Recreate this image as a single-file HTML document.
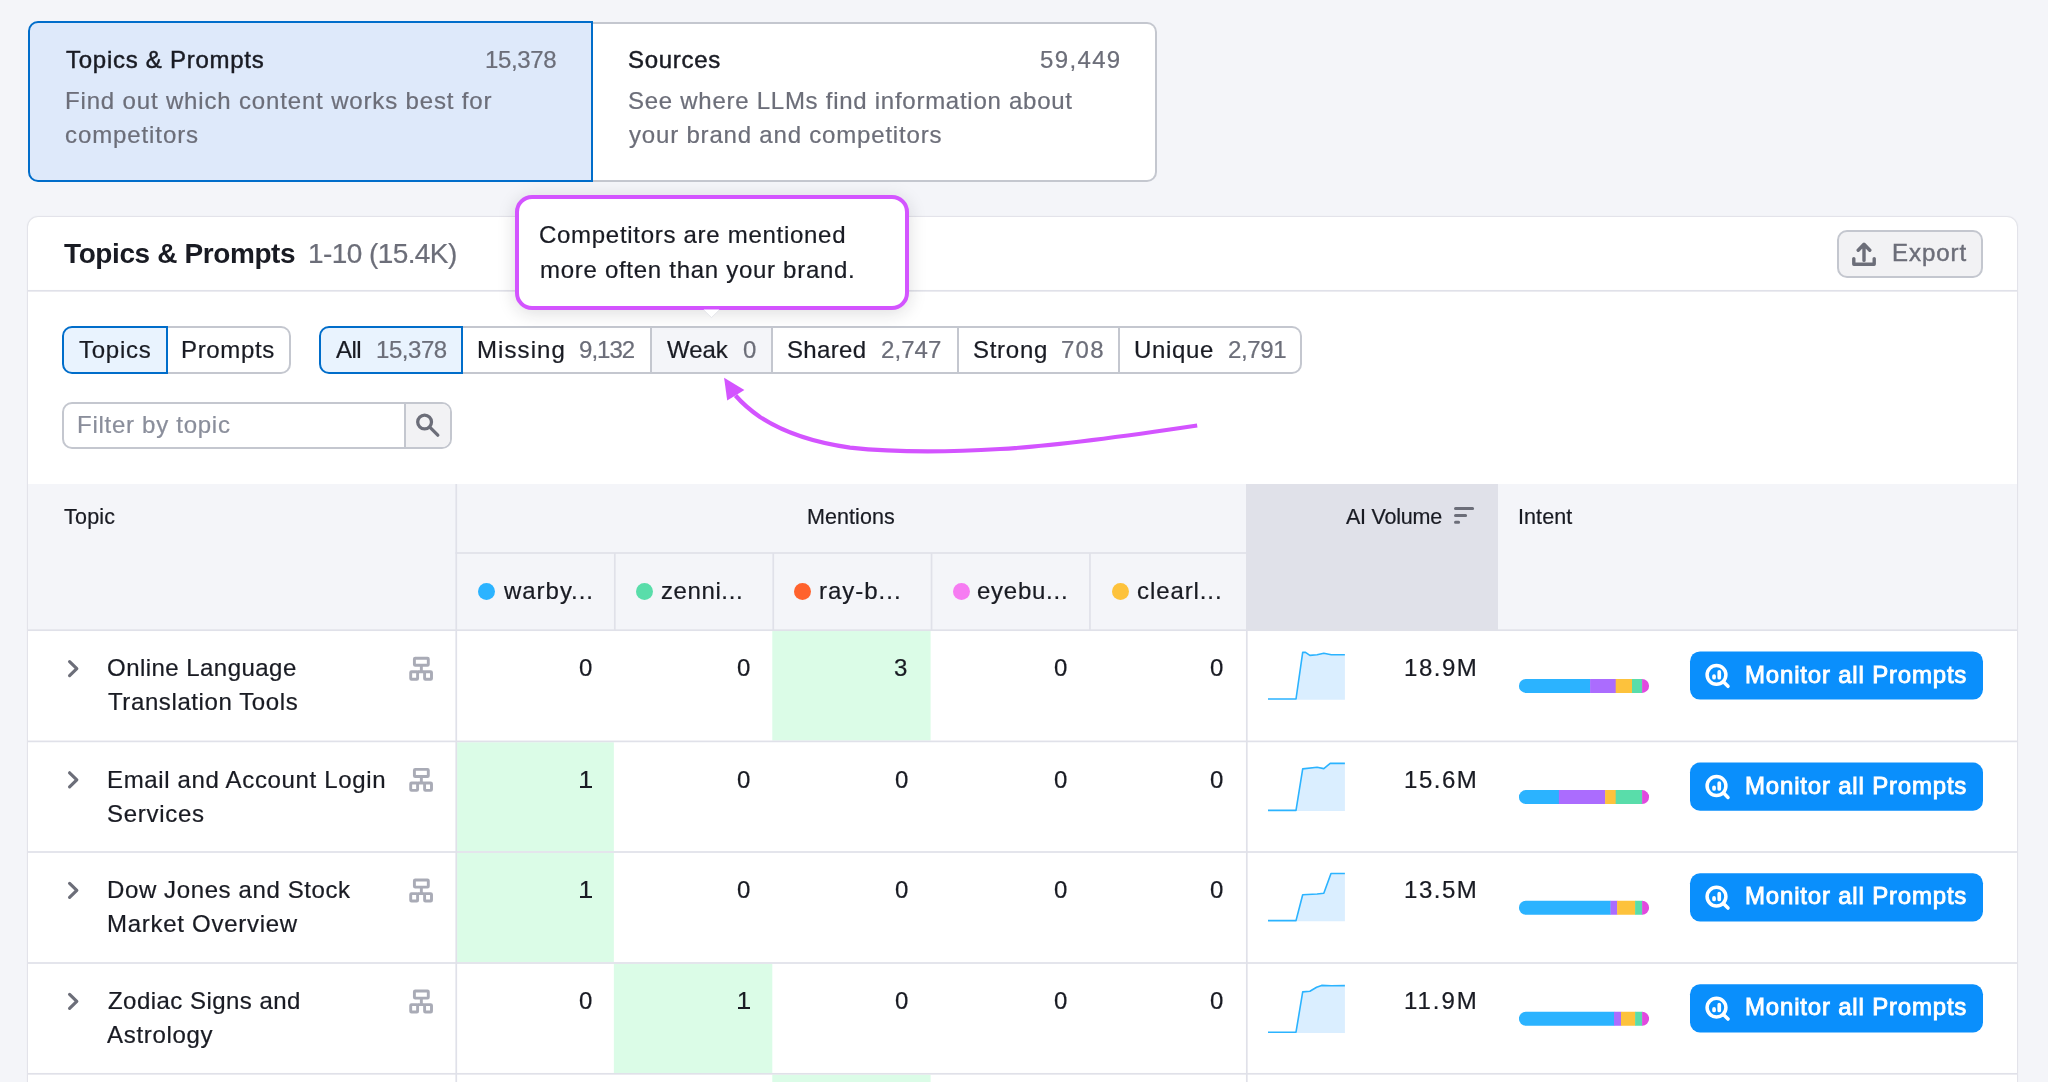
<!DOCTYPE html>
<html><head><meta charset="utf-8"><title>Topics &amp; Prompts</title>
<style>
html,body{margin:0;padding:0;width:2048px;height:1082px;overflow:hidden;}
body{width:2048px;height:1082px;overflow:hidden;background:#f4f5f9;position:relative;font-family:"Liberation Sans",sans-serif;}
.t{will-change:transform;position:absolute;white-space:nowrap;line-height:1;font-family:"Liberation Sans",sans-serif;z-index:8;}
.a{position:absolute;box-sizing:border-box;}
svg{position:absolute;overflow:hidden;}
.btn{position:absolute;box-sizing:border-box;background:#0a8ffc;border-radius:10px;width:293px;height:48px;left:1690px;z-index:2;}
.gr{position:absolute;background:#dbfce7;z-index:1;}
.hl{position:absolute;background:#e0e1e9;height:2px;z-index:2;}
.vl{position:absolute;background:#e0e1e9;width:2px;z-index:2;}
.dot{position:absolute;width:17px;height:17px;border-radius:50%;z-index:3;}
.bar{position:absolute;left:1519px;width:130px;height:13px;border-radius:7px;overflow:hidden;z-index:2;}
.bar i{position:absolute;top:0;height:13px;}

</style></head>
<body>
<div class="a" style="left:592px;top:22px;width:565px;height:160px;background:#fff;border:2px solid #c4c7cf;border-left:none;border-radius:0 10px 10px 0;"></div>
<div class="a" style="left:28px;top:21px;width:565px;height:161px;background:#dee9fa;border:2px solid #006dca;border-radius:10px 0 0 10px;"></div>
<div class="a" style="left:28px;top:217px;width:1989px;height:865px;background:#fff;border-radius:10px 10px 0 0;box-shadow:0 0 1px 1px #e1e2e8;"></div>
<div class="a" style="left:1837px;top:230px;width:146px;height:48px;background:#f2f2f4;border:2px solid #c4c7cf;border-radius:10px;"></div>
<svg style="left:0;top:0;z-index:4" width="2048" height="300"><g fill="none" stroke="#6c6e79" stroke-width="3.4" stroke-linecap="round" stroke-linejoin="round"><path d="M1864 260.4V244.6M1858.2 250.2L1864 244.2L1869.8 250.2"/><path d="M1853.8 258.6V264.2H1874.2V258.6"/></g></svg>
<div class="a" style="left:166px;top:326px;width:125px;height:48px;background:#fff;border:2px solid #c4c7cf;border-left:none;border-radius:0 10px 10px 0;"></div>
<div class="a" style="left:62px;top:326px;width:106px;height:48px;background:#e9f3fe;border:2px solid #006dca;border-radius:10px 0 0 10px;"></div>
<div class="a" style="left:461px;top:326px;width:841px;height:48px;background:#fff;border:2px solid #c4c7cf;border-left:none;border-radius:0 10px 10px 0;"></div>
<div class="a" style="left:651px;top:328px;width:121px;height:44px;background:#f4f5f9;"></div>
<div class="a" style="left:650px;top:328px;width:2px;height:44px;background:#c4c7cf;"></div>
<div class="a" style="left:771px;top:328px;width:2px;height:44px;background:#c4c7cf;"></div>
<div class="a" style="left:957px;top:328px;width:2px;height:44px;background:#c4c7cf;"></div>
<div class="a" style="left:1118px;top:328px;width:2px;height:44px;background:#c4c7cf;"></div>
<div class="a" style="left:319px;top:326px;width:144px;height:48px;background:#e9f3fe;border:2px solid #006dca;border-radius:10px 0 0 10px;"></div>
<div class="a" style="left:62px;top:402px;width:390px;height:47px;background:#fff;border:2px solid #c4c7cf;border-radius:10px;overflow:hidden;"><div class="a" style="left:340px;top:0;width:2px;height:43px;background:#c4c7cf;"></div><div class="a" style="left:342px;top:0;width:44px;height:43px;background:#f2f2f4;"></div></div>
<svg style="left:0;top:0;z-index:4" width="2048" height="500"><g fill="none" stroke="#6c6e79" stroke-width="3.3" stroke-linecap="round"><circle cx="424.6" cy="422" r="6.9"/><path d="M429.8 427.2L437.8 435.2"/></g></svg>
<div class="a" style="left:28px;top:484px;width:1989px;height:146px;background:#f4f5f9;"></div>
<div class="a" style="left:1246px;top:484px;width:252px;height:146px;background:#e0e1e9;"></div>
<svg style="left:0;top:0;z-index:4" width="2048" height="600"><g stroke="#6c6e79" stroke-width="3" stroke-linecap="round"><path d="M1455.5 508.6H1472.6M1455.5 515.4H1465.6M1455.5 522.3H1458.6"/></g></svg>
<div class="dot" style="left:477.9px;top:583px;background:#2bb3ff;"></div>
<div class="dot" style="left:636px;top:583px;background:#59ddaa;"></div>
<div class="dot" style="left:794px;top:583px;background:#ff622d;"></div>
<div class="dot" style="left:952.5px;top:583px;background:#f67cf2;"></div>
<div class="dot" style="left:1111.5px;top:583px;background:#fdc23c;"></div>
<svg style="left:0;top:0;z-index:3" width="2048" height="1082"><g transform="translate(0 630.00)"><path d="M69.6 31.6L76.8 38.6L69.6 45.6" fill="none" stroke="#6c6e79" stroke-width="3.2" stroke-linecap="round" stroke-linejoin="round"/><g fill="none" stroke="#a9abb6" stroke-width="2.9" stroke-linejoin="round"><rect x="414.4" y="28.2" width="13.9" height="7.1" rx="0.8"/><path d="M421.35 35.3V41.8M417.6 41.8H424.6"/><rect x="410.7" y="41.8" width="6.9" height="7.4" rx="0.8"/><rect x="424.6" y="41.8" width="6.9" height="7.4" rx="0.8"/></g><path d="M1296.0 69.0 L1302.7 22.4 L1305.5 22.4 L1309.9 25.4 L1317.1 24.8 L1323.8 23.3 L1331.3 24.8 L1344.9 24.8 L1344.9 69.7 L1296.0 69.7Z" fill="#daeeff"/><path d="M1268.0 69.0 L1296.0 69.0 L1302.7 22.4 L1305.5 22.4 L1309.9 25.4 L1317.1 24.8 L1323.8 23.3 L1331.3 24.8 L1344.9 24.8" fill="none" stroke="#2bb3ff" stroke-width="1.6" stroke-linejoin="round"/><clipPath id="cp0"><rect x="1518.9" y="48.9" width="130.2" height="14" rx="7"/></clipPath><g clip-path="url(#cp0)"><rect x="1518.9" y="48" width="71.5" height="16" fill="#2bb3ff"/><rect x="1590.1" y="48" width="25.9" height="16" fill="#ab6cfe"/><rect x="1615.7" y="48" width="16.6" height="16" fill="#fdc23c"/><rect x="1632.0" y="48" width="10.4" height="16" fill="#59ddaa"/><rect x="1642.1" y="48" width="7.3" height="16" fill="#e14adf"/></g><rect x="1690" y="21.4" width="293" height="48.2" rx="10" fill="#0a8ffc"/><g fill="none" stroke="#fff" stroke-width="3.5" stroke-linecap="round"><circle cx="1716.5" cy="44.8" r="9.4"/><path d="M1723.6 51.9L1728 56.3"/></g><g stroke="#fff" stroke-width="3.7" stroke-linecap="round"><path d="M1714.05 46.1V47.7M1719.25 41.9V47.7"/></g></g><g transform="translate(0 741.20)"><path d="M69.6 31.6L76.8 38.6L69.6 45.6" fill="none" stroke="#6c6e79" stroke-width="3.2" stroke-linecap="round" stroke-linejoin="round"/><g fill="none" stroke="#a9abb6" stroke-width="2.9" stroke-linejoin="round"><rect x="414.4" y="28.2" width="13.9" height="7.1" rx="0.8"/><path d="M421.35 35.3V41.8M417.6 41.8H424.6"/><rect x="410.7" y="41.8" width="6.9" height="7.4" rx="0.8"/><rect x="424.6" y="41.8" width="6.9" height="7.4" rx="0.8"/></g><path d="M1296.0 69.2 L1302.7 27.7 L1317.1 26.1 L1323.8 27.4 L1330.2 22.2 L1344.9 22.2 L1344.9 69.9 L1296.0 69.9Z" fill="#daeeff"/><path d="M1268.0 69.2 L1296.0 69.2 L1302.7 27.7 L1317.1 26.1 L1323.8 27.4 L1330.2 22.2 L1344.9 22.2" fill="none" stroke="#2bb3ff" stroke-width="1.6" stroke-linejoin="round"/><clipPath id="cp1"><rect x="1518.9" y="48.9" width="130.2" height="14" rx="7"/></clipPath><g clip-path="url(#cp1)"><rect x="1518.9" y="48" width="40.3" height="16" fill="#2bb3ff"/><rect x="1558.9" y="48" width="46.5" height="16" fill="#ab6cfe"/><rect x="1605.1" y="48" width="10.9" height="16" fill="#fdc23c"/><rect x="1615.7" y="48" width="26.7" height="16" fill="#59ddaa"/><rect x="1642.1" y="48" width="7.3" height="16" fill="#e14adf"/></g><rect x="1690" y="21.4" width="293" height="48.2" rx="10" fill="#0a8ffc"/><g fill="none" stroke="#fff" stroke-width="3.5" stroke-linecap="round"><circle cx="1716.5" cy="44.8" r="9.4"/><path d="M1723.6 51.9L1728 56.3"/></g><g stroke="#fff" stroke-width="3.7" stroke-linecap="round"><path d="M1714.05 46.1V47.7M1719.25 41.9V47.7"/></g></g><g transform="translate(0 851.80)"><path d="M69.6 31.6L76.8 38.6L69.6 45.6" fill="none" stroke="#6c6e79" stroke-width="3.2" stroke-linecap="round" stroke-linejoin="round"/><g fill="none" stroke="#a9abb6" stroke-width="2.9" stroke-linejoin="round"><rect x="414.4" y="28.2" width="13.9" height="7.1" rx="0.8"/><path d="M421.35 35.3V41.8M417.6 41.8H424.6"/><rect x="410.7" y="41.8" width="6.9" height="7.4" rx="0.8"/><rect x="424.6" y="41.8" width="6.9" height="7.4" rx="0.8"/></g><path d="M1296.0 68.8 L1302.7 43.0 L1317.1 42.2 L1323.8 41.5 L1331.0 21.7 L1344.9 21.7 L1344.9 69.5 L1296.0 69.5Z" fill="#daeeff"/><path d="M1268.0 68.8 L1296.0 68.8 L1302.7 43.0 L1317.1 42.2 L1323.8 41.5 L1331.0 21.7 L1344.9 21.7" fill="none" stroke="#2bb3ff" stroke-width="1.6" stroke-linejoin="round"/><clipPath id="cp2"><rect x="1518.9" y="48.9" width="130.2" height="14" rx="7"/></clipPath><g clip-path="url(#cp2)"><rect x="1518.9" y="48" width="91.9" height="16" fill="#2bb3ff"/><rect x="1610.5" y="48" width="6.9" height="16" fill="#ab6cfe"/><rect x="1617.1" y="48" width="18.3" height="16" fill="#fdc23c"/><rect x="1635.1" y="48" width="7.3" height="16" fill="#59ddaa"/><rect x="1642.1" y="48" width="7.3" height="16" fill="#e14adf"/></g><rect x="1690" y="21.4" width="293" height="48.2" rx="10" fill="#0a8ffc"/><g fill="none" stroke="#fff" stroke-width="3.5" stroke-linecap="round"><circle cx="1716.5" cy="44.8" r="9.4"/><path d="M1723.6 51.9L1728 56.3"/></g><g stroke="#fff" stroke-width="3.7" stroke-linecap="round"><path d="M1714.05 46.1V47.7M1719.25 41.9V47.7"/></g></g><g transform="translate(0 962.80)"><path d="M69.6 31.6L76.8 38.6L69.6 45.6" fill="none" stroke="#6c6e79" stroke-width="3.2" stroke-linecap="round" stroke-linejoin="round"/><g fill="none" stroke="#a9abb6" stroke-width="2.9" stroke-linejoin="round"><rect x="414.4" y="28.2" width="13.9" height="7.1" rx="0.8"/><path d="M421.35 35.3V41.8M417.6 41.8H424.6"/><rect x="410.7" y="41.8" width="6.9" height="7.4" rx="0.8"/><rect x="424.6" y="41.8" width="6.9" height="7.4" rx="0.8"/></g><path d="M1296.0 69.4 L1302.7 29.1 L1309.9 28.5 L1316.6 24.5 L1321.6 22.6 L1331.3 23.0 L1344.9 22.8 L1344.9 70.1 L1296.0 70.1Z" fill="#daeeff"/><path d="M1268.0 69.4 L1296.0 69.4 L1302.7 29.1 L1309.9 28.5 L1316.6 24.5 L1321.6 22.6 L1331.3 23.0 L1344.9 22.8" fill="none" stroke="#2bb3ff" stroke-width="1.6" stroke-linejoin="round"/><clipPath id="cp3"><rect x="1518.9" y="48.9" width="130.2" height="14" rx="7"/></clipPath><g clip-path="url(#cp3)"><rect x="1518.9" y="48" width="95.4" height="16" fill="#2bb3ff"/><rect x="1614.0" y="48" width="7.3" height="16" fill="#ab6cfe"/><rect x="1621.0" y="48" width="14.4" height="16" fill="#fdc23c"/><rect x="1635.1" y="48" width="7.3" height="16" fill="#59ddaa"/><rect x="1642.1" y="48" width="7.3" height="16" fill="#e14adf"/></g><rect x="1690" y="21.4" width="293" height="48.2" rx="10" fill="#0a8ffc"/><g fill="none" stroke="#fff" stroke-width="3.5" stroke-linecap="round"><circle cx="1716.5" cy="44.8" r="9.4"/><path d="M1723.6 51.9L1728 56.3"/></g><g stroke="#fff" stroke-width="3.7" stroke-linecap="round"><path d="M1714.05 46.1V47.7M1719.25 41.9V47.7"/></g></g></svg>
<div class="a" style="left:579.9px;top:786px;width:12px;height:2px;background:#191b23;z-index:9;"></div>
<div class="a" style="left:579.9px;top:896px;width:12px;height:2px;background:#191b23;z-index:9;"></div>
<div class="a" style="left:737.9px;top:1007px;width:12px;height:2px;background:#191b23;z-index:9;"></div>
<svg style="left:0;top:0;z-index:2" width="2048" height="1082"><rect x="772.30" y="631.05" width="158.30" height="109.50" fill="#dbfce7"/><rect x="457.10" y="742.25" width="156.75" height="108.90" fill="#dbfce7"/><rect x="457.10" y="852.85" width="156.75" height="109.30" fill="#dbfce7"/><rect x="613.85" y="963.85" width="158.45" height="109.10" fill="#dbfce7"/><rect x="772.30" y="1074.65" width="158.30" height="15.35" fill="#dbfce7"/><rect x="28" y="289.95" width="1989" height="1.7" fill="#e0e1e9"/><rect x="455.4" y="552.15" width="790.60" height="1.7" fill="#e0e1e9"/><rect x="28" y="629.35" width="1989" height="1.7" fill="#e0e1e9"/><rect x="28" y="740.55" width="1989" height="1.7" fill="#e0e1e9"/><rect x="28" y="851.15" width="1989" height="1.7" fill="#e0e1e9"/><rect x="28" y="962.15" width="1989" height="1.7" fill="#e0e1e9"/><rect x="28" y="1072.95" width="1989" height="1.7" fill="#e0e1e9"/><rect x="455.4" y="484" width="1.7" height="620" fill="#e0e1e9"/><rect x="1245.95" y="630.2" width="1.7" height="500" fill="#e0e1e9"/><rect x="613.95" y="553" width="1.7" height="77.20" fill="#e0e1e9"/><rect x="772.40" y="553" width="1.7" height="77.20" fill="#e0e1e9"/><rect x="930.70" y="553" width="1.7" height="77.20" fill="#e0e1e9"/><rect x="1089.10" y="553" width="1.7" height="77.20" fill="#e0e1e9"/></svg>
<div class="a" style="left:515px;top:195px;width:393.5px;height:115px;background:#fff;border:4px solid #d354ff;border-radius:17px;z-index:6;box-shadow:0 3px 18px rgba(25,27,35,0.15);"></div>
<svg style="left:0;top:0;z-index:7" width="2048" height="500"><path d="M703.6 309.6L711.5 317.4L719.4 309.6Z" fill="#fff"/><path d="M704 310.2L711.5 317.6L719 310.2" fill="none" stroke="#e3e4ea" stroke-width="0.9"/></svg>
<svg style="left:0;top:0;z-index:7" width="2048" height="500"><path d="M1197.2 425.5C1100 440 1040 447 1000 449C960 451.5 900 453 850 447.6C810 442 780 430 760 417C750 410 742 403 735.5 395.5" fill="none" stroke="#d354ff" stroke-width="4.2"/><path d="M724.1 377.8L744.4 390L727.2 400.6Z" fill="#d354ff"/></svg>
<span class="t" style="left:66.08px;top:48.00px;font-size:24px;font-weight:400;color:#191b23;letter-spacing:0.728px;-webkit-text-stroke:0.45px #191b23;">Topics &amp; Prompts</span>
<span class="t" style="left:484.56px;top:48.00px;font-size:24px;font-weight:400;color:#6c6e79;letter-spacing:-0.345px;-webkit-text-stroke:0.22px #6c6e79;">15,378</span>
<span class="t" style="left:65.30px;top:89.00px;font-size:24px;font-weight:400;color:#6c6e79;letter-spacing:0.840px;-webkit-text-stroke:0.22px #6c6e79;">Find out which content works best for</span>
<span class="t" style="left:65.38px;top:123.00px;font-size:24px;font-weight:400;color:#6c6e79;letter-spacing:0.901px;-webkit-text-stroke:0.22px #6c6e79;">competitors</span>
<span class="t" style="left:628.06px;top:48.00px;font-size:24px;font-weight:400;color:#191b23;letter-spacing:0.689px;-webkit-text-stroke:0.45px #191b23;">Sources</span>
<span class="t" style="left:1039.56px;top:48.00px;font-size:24px;font-weight:400;color:#6c6e79;letter-spacing:1.355px;-webkit-text-stroke:0.22px #6c6e79;">59,449</span>
<span class="t" style="left:628.06px;top:89.00px;font-size:24px;font-weight:400;color:#6c6e79;letter-spacing:0.733px;-webkit-text-stroke:0.22px #6c6e79;">See where LLMs find information about</span>
<span class="t" style="left:628.96px;top:123.00px;font-size:24px;font-weight:400;color:#6c6e79;letter-spacing:0.812px;-webkit-text-stroke:0.22px #6c6e79;">your brand and competitors</span>
<span class="t" style="left:63.52px;top:240.00px;font-size:28px;font-weight:700;color:#191b23;letter-spacing:-0.394px;">Topics &amp; Prompts</span>
<span class="t" style="left:308.30px;top:240.00px;font-size:28px;font-weight:400;color:#6c6e79;letter-spacing:-0.578px;-webkit-text-stroke:0.22px #6c6e79;">1-10 (15.4K)</span>
<span class="t" style="left:539.06px;top:223.00px;font-size:24px;font-weight:400;color:#191b23;letter-spacing:0.709px;-webkit-text-stroke:0.22px #191b23;">Competitors are mentioned</span>
<span class="t" style="left:539.62px;top:258.00px;font-size:24px;font-weight:400;color:#191b23;letter-spacing:0.714px;-webkit-text-stroke:0.22px #191b23;">more often than your brand.</span>
<span class="t" style="left:1891.54px;top:241.00px;font-size:24px;font-weight:400;color:#6c6e79;letter-spacing:0.949px;-webkit-text-stroke:0.45px #6c6e79;">Export</span>
<span class="t" style="left:78.70px;top:338.00px;font-size:24px;font-weight:400;color:#191b23;letter-spacing:0.762px;-webkit-text-stroke:0.22px #191b23;">Topics</span>
<span class="t" style="left:181.30px;top:338.00px;font-size:24px;font-weight:400;color:#191b23;letter-spacing:0.660px;-webkit-text-stroke:0.22px #191b23;">Prompts</span>
<span class="t" style="left:335.52px;top:338.00px;font-size:24px;font-weight:400;color:#191b23;letter-spacing:-0.596px;-webkit-text-stroke:0.22px #191b23;">All</span>
<span class="t" style="left:375.56px;top:338.00px;font-size:24px;font-weight:400;color:#6c6e79;letter-spacing:-0.457px;-webkit-text-stroke:0.22px #6c6e79;">15,378</span>
<span class="t" style="left:476.54px;top:338.00px;font-size:24px;font-weight:400;color:#191b23;letter-spacing:1.080px;-webkit-text-stroke:0.22px #191b23;">Missing</span>
<span class="t" style="left:578.62px;top:338.00px;font-size:24px;font-weight:400;color:#6c6e79;letter-spacing:-0.971px;-webkit-text-stroke:0.22px #6c6e79;">9,132</span>
<span class="t" style="left:667.08px;top:338.00px;font-size:24px;font-weight:400;color:#191b23;letter-spacing:-0.027px;-webkit-text-stroke:0.22px #191b23;">Weak</span>
<span class="t" style="left:743.00px;top:338.00px;font-size:24px;font-weight:400;color:#6c6e79;letter-spacing:0.000px;-webkit-text-stroke:0.22px #6c6e79;">0</span>
<span class="t" style="left:787.06px;top:338.00px;font-size:24px;font-weight:400;color:#191b23;letter-spacing:0.322px;-webkit-text-stroke:0.22px #191b23;">Shared</span>
<span class="t" style="left:881.06px;top:338.00px;font-size:24px;font-weight:400;color:#6c6e79;letter-spacing:0.059px;-webkit-text-stroke:0.22px #6c6e79;">2,747</span>
<span class="t" style="left:973.00px;top:338.00px;font-size:24px;font-weight:400;color:#191b23;letter-spacing:0.720px;-webkit-text-stroke:0.22px #191b23;">Strong</span>
<span class="t" style="left:1061.38px;top:338.00px;font-size:24px;font-weight:400;color:#6c6e79;letter-spacing:1.257px;-webkit-text-stroke:0.22px #6c6e79;">708</span>
<span class="t" style="left:1133.88px;top:338.00px;font-size:24px;font-weight:400;color:#191b23;letter-spacing:0.675px;-webkit-text-stroke:0.22px #191b23;">Unique</span>
<span class="t" style="left:1228.12px;top:338.00px;font-size:24px;font-weight:400;color:#6c6e79;letter-spacing:-0.361px;-webkit-text-stroke:0.22px #6c6e79;">2,791</span>
<span class="t" style="left:77.30px;top:413.00px;font-size:24px;font-weight:400;color:#8a8e9b;letter-spacing:0.730px;-webkit-text-stroke:0.22px #8a8e9b;">Filter by topic</span>
<span class="t" style="left:63.52px;top:507.00px;font-size:21.5px;font-weight:400;color:#191b23;letter-spacing:0.209px;-webkit-text-stroke:0.22px #191b23;">Topic</span>
<span class="t" style="left:807.44px;top:507.00px;font-size:21.5px;font-weight:400;color:#191b23;letter-spacing:0.079px;-webkit-text-stroke:0.22px #191b23;">Mentions</span>
<span class="t" style="left:1346.14px;top:507.00px;font-size:21.5px;font-weight:400;color:#191b23;letter-spacing:-0.238px;-webkit-text-stroke:0.22px #191b23;">AI Volume</span>
<span class="t" style="left:1517.86px;top:507.00px;font-size:21.5px;font-weight:400;color:#191b23;letter-spacing:0.089px;-webkit-text-stroke:0.22px #191b23;">Intent</span>
<span class="t" style="left:504.02px;top:579.00px;font-size:24px;font-weight:400;color:#191b23;letter-spacing:0.964px;-webkit-text-stroke:0.22px #191b23;">warby...</span>
<span class="t" style="left:660.56px;top:579.00px;font-size:24px;font-weight:400;color:#191b23;letter-spacing:0.598px;-webkit-text-stroke:0.22px #191b23;">zenni...</span>
<span class="t" style="left:818.56px;top:579.00px;font-size:24px;font-weight:400;color:#191b23;letter-spacing:0.985px;-webkit-text-stroke:0.22px #191b23;">ray-b...</span>
<span class="t" style="left:976.56px;top:579.00px;font-size:24px;font-weight:400;color:#191b23;letter-spacing:0.739px;-webkit-text-stroke:0.22px #191b23;">eyebu...</span>
<span class="t" style="left:1136.56px;top:579.00px;font-size:24px;font-weight:400;color:#191b23;letter-spacing:0.903px;-webkit-text-stroke:0.22px #191b23;">clearl...</span>
<span class="t" style="left:107.00px;top:656.00px;font-size:24px;font-weight:400;color:#191b23;letter-spacing:0.458px;-webkit-text-stroke:0.22px #191b23;">Online Language</span>
<span class="t" style="left:107.58px;top:690.00px;font-size:24px;font-weight:400;color:#191b23;letter-spacing:0.598px;-webkit-text-stroke:0.22px #191b23;">Translation Tools</span>
<span class="t" style="left:578.96px;top:656.00px;font-size:24px;font-weight:400;color:#191b23;letter-spacing:0.000px;-webkit-text-stroke:0.22px #191b23;">0</span>
<span class="t" style="left:736.96px;top:656.00px;font-size:24px;font-weight:400;color:#191b23;letter-spacing:0.000px;-webkit-text-stroke:0.22px #191b23;">0</span>
<span class="t" style="left:894.06px;top:656.00px;font-size:24px;font-weight:400;color:#191b23;letter-spacing:0.000px;-webkit-text-stroke:0.22px #191b23;">3</span>
<span class="t" style="left:1053.96px;top:656.00px;font-size:24px;font-weight:400;color:#191b23;letter-spacing:0.000px;-webkit-text-stroke:0.22px #191b23;">0</span>
<span class="t" style="left:1209.96px;top:656.00px;font-size:24px;font-weight:400;color:#191b23;letter-spacing:0.000px;-webkit-text-stroke:0.22px #191b23;">0</span>
<span class="t" style="left:1404.00px;top:656.00px;font-size:24px;font-weight:400;color:#191b23;letter-spacing:1.529px;-webkit-text-stroke:0.22px #191b23;">18.9M</span>
<span class="t" style="left:1745.44px;top:663.00px;font-size:24px;font-weight:400;color:#fff;letter-spacing:0.813px;-webkit-text-stroke:0.9px #fff;">Monitor all Prompts</span>
<span class="t" style="left:106.92px;top:768.00px;font-size:24px;font-weight:400;color:#191b23;letter-spacing:0.651px;-webkit-text-stroke:0.22px #191b23;">Email and Account Login</span>
<span class="t" style="left:106.62px;top:802.00px;font-size:24px;font-weight:400;color:#191b23;letter-spacing:0.727px;-webkit-text-stroke:0.22px #191b23;">Services</span>
<span class="t" style="left:579.42px;top:768.00px;font-size:24px;font-weight:400;color:#191b23;letter-spacing:0.000px;-webkit-text-stroke:0.22px #191b23;">1</span>
<span class="t" style="left:736.96px;top:768.00px;font-size:24px;font-weight:400;color:#191b23;letter-spacing:0.000px;-webkit-text-stroke:0.22px #191b23;">0</span>
<span class="t" style="left:895.46px;top:768.00px;font-size:24px;font-weight:400;color:#191b23;letter-spacing:0.000px;-webkit-text-stroke:0.22px #191b23;">0</span>
<span class="t" style="left:1053.96px;top:768.00px;font-size:24px;font-weight:400;color:#191b23;letter-spacing:0.000px;-webkit-text-stroke:0.22px #191b23;">0</span>
<span class="t" style="left:1209.96px;top:768.00px;font-size:24px;font-weight:400;color:#191b23;letter-spacing:0.000px;-webkit-text-stroke:0.22px #191b23;">0</span>
<span class="t" style="left:1404.00px;top:768.00px;font-size:24px;font-weight:400;color:#191b23;letter-spacing:1.529px;-webkit-text-stroke:0.22px #191b23;">15.6M</span>
<span class="t" style="left:1745.44px;top:774.00px;font-size:24px;font-weight:400;color:#fff;letter-spacing:0.813px;-webkit-text-stroke:0.9px #fff;">Monitor all Prompts</span>
<span class="t" style="left:106.92px;top:878.00px;font-size:24px;font-weight:400;color:#191b23;letter-spacing:0.611px;-webkit-text-stroke:0.22px #191b23;">Dow Jones and Stock</span>
<span class="t" style="left:106.92px;top:912.00px;font-size:24px;font-weight:400;color:#191b23;letter-spacing:0.720px;-webkit-text-stroke:0.22px #191b23;">Market Overview</span>
<span class="t" style="left:579.42px;top:878.00px;font-size:24px;font-weight:400;color:#191b23;letter-spacing:0.000px;-webkit-text-stroke:0.22px #191b23;">1</span>
<span class="t" style="left:736.96px;top:878.00px;font-size:24px;font-weight:400;color:#191b23;letter-spacing:0.000px;-webkit-text-stroke:0.22px #191b23;">0</span>
<span class="t" style="left:895.46px;top:878.00px;font-size:24px;font-weight:400;color:#191b23;letter-spacing:0.000px;-webkit-text-stroke:0.22px #191b23;">0</span>
<span class="t" style="left:1053.96px;top:878.00px;font-size:24px;font-weight:400;color:#191b23;letter-spacing:0.000px;-webkit-text-stroke:0.22px #191b23;">0</span>
<span class="t" style="left:1209.96px;top:878.00px;font-size:24px;font-weight:400;color:#191b23;letter-spacing:0.000px;-webkit-text-stroke:0.22px #191b23;">0</span>
<span class="t" style="left:1404.00px;top:878.00px;font-size:24px;font-weight:400;color:#191b23;letter-spacing:1.529px;-webkit-text-stroke:0.22px #191b23;">13.5M</span>
<span class="t" style="left:1745.44px;top:884.00px;font-size:24px;font-weight:400;color:#fff;letter-spacing:0.813px;-webkit-text-stroke:0.9px #fff;">Monitor all Prompts</span>
<span class="t" style="left:108.02px;top:989.00px;font-size:24px;font-weight:400;color:#191b23;letter-spacing:0.464px;-webkit-text-stroke:0.22px #191b23;">Zodiac Signs and</span>
<span class="t" style="left:107.46px;top:1023.00px;font-size:24px;font-weight:400;color:#191b23;letter-spacing:0.692px;-webkit-text-stroke:0.22px #191b23;">Astrology</span>
<span class="t" style="left:578.96px;top:989.00px;font-size:24px;font-weight:400;color:#191b23;letter-spacing:0.000px;-webkit-text-stroke:0.22px #191b23;">0</span>
<span class="t" style="left:737.42px;top:989.00px;font-size:24px;font-weight:400;color:#191b23;letter-spacing:0.000px;-webkit-text-stroke:0.22px #191b23;">1</span>
<span class="t" style="left:895.46px;top:989.00px;font-size:24px;font-weight:400;color:#191b23;letter-spacing:0.000px;-webkit-text-stroke:0.22px #191b23;">0</span>
<span class="t" style="left:1053.96px;top:989.00px;font-size:24px;font-weight:400;color:#191b23;letter-spacing:0.000px;-webkit-text-stroke:0.22px #191b23;">0</span>
<span class="t" style="left:1209.96px;top:989.00px;font-size:24px;font-weight:400;color:#191b23;letter-spacing:0.000px;-webkit-text-stroke:0.22px #191b23;">0</span>
<span class="t" style="left:1404.00px;top:989.00px;font-size:24px;font-weight:400;color:#191b23;letter-spacing:1.975px;-webkit-text-stroke:0.22px #191b23;">11.9M</span>
<span class="t" style="left:1745.44px;top:995.00px;font-size:24px;font-weight:400;color:#fff;letter-spacing:0.813px;-webkit-text-stroke:0.9px #fff;">Monitor all Prompts</span>
</body></html>
